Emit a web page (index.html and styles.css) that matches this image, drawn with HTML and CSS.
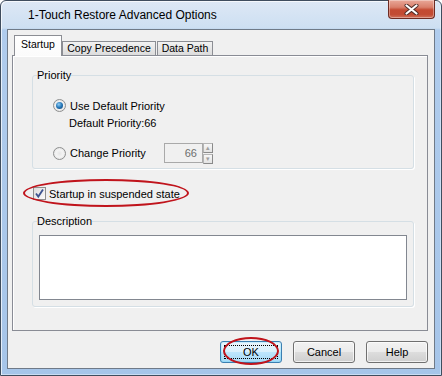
FILE: index.html
```html
<!DOCTYPE html>
<html lang="en">
<head>
  <meta charset="UTF-8" />
  <title>1-Touch Restore Advanced Options</title>
  <link rel="stylesheet" href="styles.css">
</head>
<body>

  <div class="window">
    <div class="titlebar">
      <span class="title">1-Touch Restore Advanced Options</span>
      <button class="close-btn" aria-label="Close">
        <svg width="15" height="11" viewBox="0 0 15 11">
          <path d="M2.5 1.5 L12.5 9.5 M12.5 1.5 L2.5 9.5" stroke="#4a2a26" stroke-width="4" stroke-linecap="round"/>
          <path d="M2.5 1.5 L12.5 9.5 M12.5 1.5 L2.5 9.5" stroke="#ffffff" stroke-width="2.2" stroke-linecap="round"/>
        </svg>
      </button>
    </div>

    <div class="client">
      <div class="tabs">
        <div class="tab active">Startup</div>
        <div class="tab copy">Copy Precedence</div>
        <div class="tab path">Data Path</div>
      </div>

      <div class="panel">
        <fieldset class="group priority">
          <legend>Priority</legend>
          <label class="option first">
            <span class="radio checked"></span>Use Default Priority
          </label>
          <div class="note">Default Priority:66</div>
          <div class="option-row">
            <label class="option change">
              <span class="radio"></span>Change Priority
            </label>
            <div class="spinner">
              <span class="spin-field">66</span>
              <span class="spin-btns">
                <span class="spin-btn">&#9652;</span>
                <span class="spin-btn">&#9662;</span>
              </span>
            </div>
          </div>
        </fieldset>

        <label class="check-row">
          <span class="checkbox">
            <svg width="11" height="11" viewBox="0 0 11 11">
              <path d="M2 5.5 L4.3 8.6 L9 1.6" fill="none" stroke="#3d5490" stroke-width="1.8"/>
            </svg>
          </span>Startup in suspended state
          <span class="ring check-ring"></span>
        </label>

        <fieldset class="group description">
          <legend>Description</legend>
          <div class="textarea"></div>
        </fieldset>
      </div>

      <div class="buttons">
        <button class="btn default"><span class="focus">OK</span><span class="ring ok-ring"></span></button>
        <button class="btn">Cancel</button>
        <button class="btn">Help</button>
      </div>
    </div>
  </div>

</body>
</html>
```

FILE: styles.css
```css
body {
  margin: 0;
  font-family: 'Liberation Sans', Arial, sans-serif;
  font-size: 11px;
  color: #000;
  background: #fff;
}

/* window frame */
.window {
  width: 442px;
  height: 376px;
  box-sizing: border-box;
  border: 1px solid #3f4d5e;
  border-radius: 6px 6px 0 0;
  padding: 0 6px 6px 6px;
  background: linear-gradient(180deg, #dde8f5 0px, #cddff2 27px, #b0cced 29px, #a6c5e9 100%);
  box-shadow: inset 1px 1px 0 rgba(255,255,255,0.7), inset -1px -1px 0 rgba(255,255,255,0.4);
}

.titlebar {
  height: 28px;
  display: flex;
  align-items: flex-start;
}

.title {
  margin: 7px 0 0 21px;
  font-size: 12px;
  line-height: 14px;
}

.close-btn {
  margin-left: auto;
  width: 47px;
  height: 19px;
  margin-top: -1px;
  padding: 0;
  border: 1px solid #6e2b22;
  border-top: none;
  border-radius: 0 0 4px 4px;
  background: linear-gradient(180deg, #e9a899 0%, #d9806c 40%, #c44a32 55%, #c24b33 80%, #d0715b 100%);
  box-shadow: inset 0 0 0 1px rgba(255,255,255,0.35);
  display: flex;
  align-items: center;
  justify-content: center;
}

.close-btn svg {
  display: block;
  margin-top: 1px;
}

/* client area */
.client {
  height: 340px;
  box-sizing: border-box;
  border: 1px solid #6f7a88;
  background: #f0f0f0;
  padding: 5px 6px 0 4px;
}

.tabs {
  display: flex;
  align-items: flex-end;
  height: 20px;
  padding-left: 2px;
  position: relative;
  z-index: 1;
}

.tab {
  box-sizing: border-box;
  height: 14px;
  border: 1px solid #8c8e94;
  border-bottom: none;
  background: linear-gradient(180deg, #f2f2f2, #dcdcdc);
  font-size: 10.5px;
  line-height: 13px;
  text-align: center;
}

.tab.active {
  width: 48px;
  height: 21px;
  margin-bottom: -1px;
  background: linear-gradient(180deg, #ffffff, #fbfbfb);
  line-height: 16px;
}

.tab.copy {
  width: 94px;
}

.tab.path {
  width: 56px;
  margin-left: 1px;
}

.panel {
  width: 416px;
  height: 276px;
  box-sizing: border-box;
  border: 1px solid #898c95;
  background: #f0f0f0;
  box-shadow: inset 1px 1px 0 #ffffff;
  padding: 13px 0 0 19px;
}

/* group boxes */
.group {
  width: 382px;
  box-sizing: border-box;
  margin: 0;
  border: 1px solid #d5dfe5;
  border-radius: 3px;
  padding: 0 0 0 4px;
  box-shadow: 1px 1px 0 #ffffff;
}

.group legend {
  padding: 0;
  line-height: 13px;
}

.option {
  display: flex;
  align-items: center;
  height: 15px;
  padding-left: 16px;
}

.option.first {
  margin-top: 16px;
}

.radio {
  box-sizing: border-box;
  width: 13px;
  height: 13px;
  border-radius: 50%;
  border: 1px solid #8e8f8f;
  background: radial-gradient(circle at 50% 50%, #e6e6e6 0, #f4f4f4 45%, #d8d8d8 100%);
  margin-right: 4px;
  position: relative;
}

.radio.checked::after {
  content: "";
  position: absolute;
  left: 2px;
  top: 2px;
  width: 7px;
  height: 7px;
  border-radius: 50%;
  background: radial-gradient(circle at 40% 35%, #8fcdf5 0, #2577b8 50%, #153f6a 100%);
}

.note {
  height: 15px;
  line-height: 15px;
  margin-top: 3px;
  padding-left: 32px;
}

.option-row {
  display: flex;
  align-items: center;
  height: 20px;
  margin-top: 12px;
  margin-bottom: 5px;
}

.option.change {
  width: 127px;
  box-sizing: border-box;
}

.spinner {
  display: flex;
  height: 20px;
}

.spin-field {
  box-sizing: border-box;
  width: 39px;
  height: 20px;
  border: 1px solid #a9a9a9;
  background: #f0f0f0;
  color: #6d6d6d;
  text-align: right;
  padding-right: 5px;
  line-height: 18px;
}

.spin-btns {
  display: flex;
  flex-direction: column;
  gap: 1px;
  width: 10px;
}

.spin-btn {
  box-sizing: border-box;
  height: 10px;
  border: 1px solid #b5b5b5;
  border-right-color: #8a8a8a;
  border-bottom-color: #8a8a8a;
  background: linear-gradient(180deg, #f7f7f7, #e3e3e3);
  color: #a0a0a0;
  font-size: 7px;
  line-height: 8px;
  text-align: center;
}

/* checkbox */
.check-row {
  position: relative;
  display: flex;
  align-items: center;
  height: 15px;
  margin: 17px 0 0 1px;
  width: 160px;
}

.checkbox {
  box-sizing: border-box;
  width: 13px;
  height: 13px;
  border: 1px solid #8e8f8f;
  background: linear-gradient(135deg, #dcdcdc, #fbfbfb);
  margin-right: 3px;
  display: flex;
  align-items: center;
  justify-content: center;
}

.checkbox svg {
  display: block;
}

/* red annotation rings */
.ring {
  position: absolute;
  box-sizing: border-box;
  border: 2px solid #c0141c;
  border-radius: 50%;
  pointer-events: none;
}

.check-ring {
  left: -10px;
  top: -7px;
  width: 166px;
  height: 28px;
}

.description {
  margin-top: 14px;
  padding-bottom: 6px;
}

.textarea {
  box-sizing: border-box;
  width: 368px;
  height: 65px;
  margin: 7px 0 0 2px;
  border: 1px solid #828790;
  background: #fff;
}

/* buttons */
.buttons {
  display: flex;
  justify-content: flex-end;
  gap: 11px;
  margin-top: 10px;
}

.btn {
  position: relative;
  box-sizing: border-box;
  width: 62px;
  height: 22px;
  padding: 0;
  border: 1px solid #707070;
  border-radius: 3px;
  background: linear-gradient(180deg, #f2f2f2 0%, #ebebeb 49%, #dddddd 50%, #cfcfcf 100%);
  box-shadow: inset 0 0 0 1px rgba(255,255,255,0.7);
  font-family: 'Liberation Sans', Arial, sans-serif;
  font-size: 11px;
  color: #000;
}

.btn.default {
  border-color: #3c7fb1;
  background: linear-gradient(180deg, #eaf6fd 0%, #d9f0fc 49%, #bee6fd 50%, #a7d9f5 100%);
  box-shadow: inset 0 0 0 1px #48d1fc33;
}

.focus {
  position: absolute;
  left: 3px;
  top: 3px;
  right: 3px;
  bottom: 3px;
  border: 1px dotted #000;
  display: flex;
  align-items: center;
  justify-content: center;
}

.ok-ring {
  left: 2px;
  top: -5px;
  width: 56px;
  height: 28px;
}
```
